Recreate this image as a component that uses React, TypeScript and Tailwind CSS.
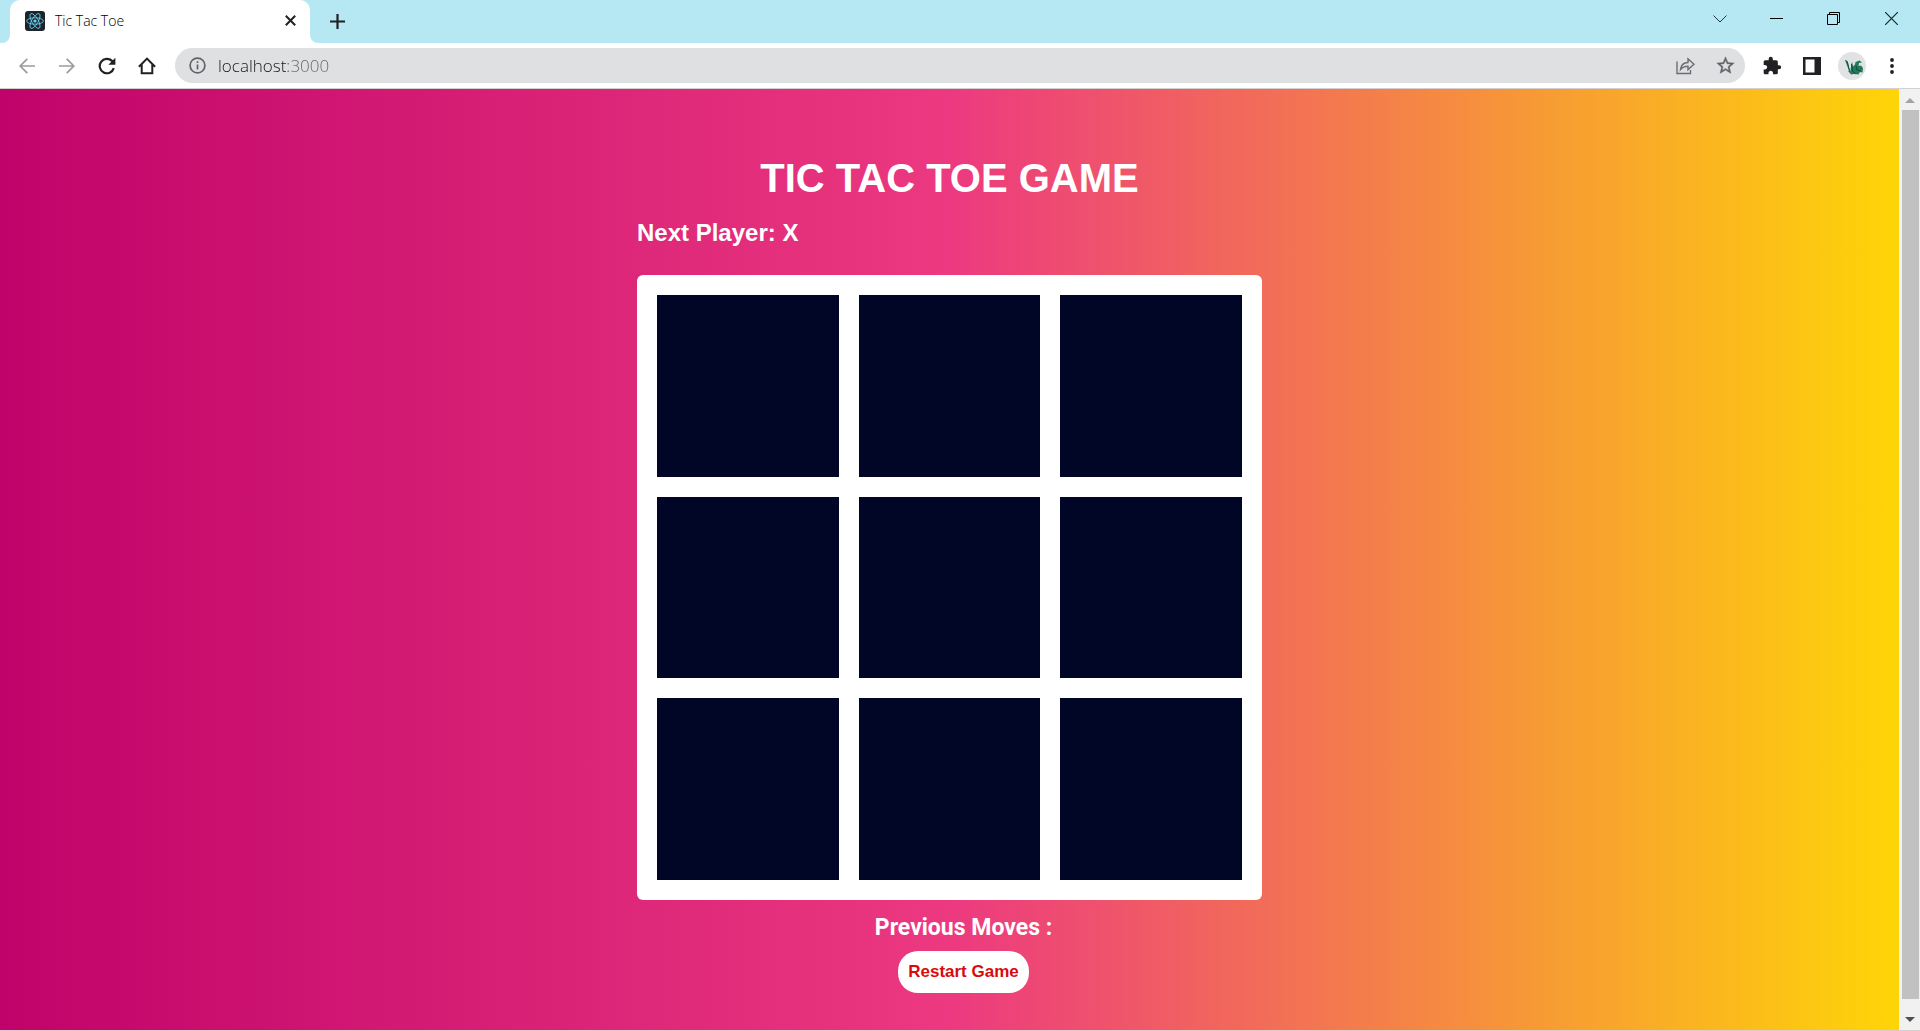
import type { ReactNode } from "react";

function IconButton({ label, className, children }: { label: string; className: string; children: ReactNode }) {
  return (
    <button type="button" aria-label={label} className={`flex shrink-0 items-center justify-center ${className}`}>
      {children}
    </button>
  );
}

function ReactLogo() {
  return (
    <svg width="20" height="20" viewBox="0 0 20 20" fill="none" stroke="#61dafb" strokeWidth="0.8">
      <rect width="20" height="20" rx="3" fill="#20232a" stroke="none" />
      <ellipse cx="10" cy="10" rx="8.4" ry="3.2" />
      <ellipse cx="10" cy="10" rx="8.4" ry="3.2" transform="rotate(60 10 10)" />
      <ellipse cx="10" cy="10" rx="8.4" ry="3.2" transform="rotate(120 10 10)" />
      <circle cx="10" cy="10" r="1.6" fill="#61dafb" stroke="none" />
    </svg>
  );
}

function TabStrip() {
  return (
    <div className="flex h-[43px] items-stretch bg-[#b5e8f2]">
      <div className="w-[10px] bg-white">
        <div className="h-full w-full rounded-br-lg bg-[#b5e8f2]" />
      </div>
      <div className="flex w-[300px] items-center rounded-t-[10px] bg-white pr-[10px] pb-[2px] pl-[15px]">
        <ReactLogo />
        <span className="ml-[10px] grow text-[14px] font-light text-black">Tic Tac Toe</span>
        <IconButton label="Close tab" className="size-5">
          <svg width="11" height="11" viewBox="0 0 11 11" stroke="#202124" strokeWidth="2">
            <path d="M0.800 0.800l9.400 9.400M10.200 0.800L0.800 10.200" />
          </svg>
        </IconButton>
      </div>
      <div className="w-[10px] bg-white">
        <div className="h-full w-full rounded-bl-lg bg-[#b5e8f2]" />
      </div>
      <IconButton label="New tab" className="w-[34px] pb-[1px]">
        <svg width="15" height="15" viewBox="0 0 15 15" stroke="#202124" strokeWidth="2.200">
          <path d="M7.500 0v15M0 7.500h15" />
        </svg>
      </IconButton>
      <div className="ml-auto flex h-[37px]">
        <IconButton label="Search tabs" className="w-14">
          <svg width="14" height="8" viewBox="0 0 14 8" fill="none" stroke="#20363b">
            <path d="M0.5 0.5L7 7l6.500-6.500" />
          </svg>
        </IconButton>
        <IconButton label="Minimize" className="w-[57px]">
          <svg width="13" height="13" viewBox="0 0 13 13" stroke="#000">
            <path d="M0 6.500h13" />
          </svg>
        </IconButton>
        <IconButton label="Restore" className="w-[57px]">
          <svg width="13" height="13" viewBox="0 0 13 13" fill="none" stroke="#000">
            <path d="M0.500 2.500h10v10h-10zM2.500 2.500v-2h10v10h-2" />
          </svg>
        </IconButton>
        <IconButton label="Close window" className="w-[58px]">
          <svg width="13" height="13" viewBox="0 0 13 13" stroke="#10282c" strokeWidth="1.200">
            <path d="M0 0l13 13M13 0L0 13" />
          </svg>
        </IconButton>
      </div>
    </div>
  );
}

function Toolbar() {
  return (
    <div className="flex h-[45px] items-center bg-white pr-2 pl-[7px]">
      <IconButton label="Back" className="w-10">
        <svg width="16" height="16" viewBox="0 0 16 16" fill="none" stroke="#9a9c9e" strokeWidth="1.700">
          <path d="M16 8H1.500M8.300 0.800L1.200 8l7.100 7.200" />
        </svg>
      </IconButton>
      <IconButton label="Forward" className="w-10">
        <svg width="16" height="16" viewBox="0 0 16 16" fill="none" stroke="#9a9c9e" strokeWidth="1.700">
          <path d="M0 8h14.500M7.700 0.800L14.800 8l-7.100 7.200" />
        </svg>
      </IconButton>
      <IconButton label="Reload" className="w-10">
        <svg width="18" height="18" viewBox="0 0 18 18" fill="none" stroke="#202124" strokeWidth="2.200">
          <path d="M15.800 11.200A7.200 7.200 0 1 1 14 3.900L16 5.900" />
          <path d="M17.400 0.800v7h-7z" fill="#202124" stroke="none" />
        </svg>
      </IconButton>
      <IconButton label="Home" className="w-10">
        <svg width="18" height="18" viewBox="0 0 18 18" fill="none" stroke="#202124" strokeWidth="2">
          <path d="M0.900 9.800L9 1.600l8.100 8.200M3.700 7.500v8.800h10.600V7.500" />
        </svg>
      </IconButton>
      <div className="ml-2 flex h-[35px] min-w-0 grow items-center rounded-full bg-[#dfe0e2] pl-[14px]">
        <svg className="shrink-0" width="17" height="17" viewBox="0 0 17 17" fill="none" stroke="#5f6368" strokeWidth="1.700">
          <circle cx="8.500" cy="8.500" r="7.400" />
          <path d="M8.500 7.500v5M8.500 4.300v1.800" />
        </svg>
        <input
          type="text"
          aria-label="Address"
          defaultValue="localhost:3000"
          className="ml-3 min-w-0 grow bg-[linear-gradient(to_right,#17181a_70px,#5f6368_70px)] bg-clip-text text-[17px] font-light text-transparent outline-none"
        />
        <IconButton label="Share" className="w-10">
          <svg width="19" height="18" viewBox="0 0 19 18" fill="none" stroke="#6a6d71" strokeWidth="1.400">
            <path d="M1 4.500V16.500h13.500V13" />
            <path d="M4.500 12.500c0.500-4.500 3-6.800 7.500-7V1.800L18 7.200l-6 5.400V9.200c-3.500 0-5.700 1-7.500 3.300z" />
          </svg>
        </IconButton>
        <IconButton label="Bookmark" className="w-10">
          <svg width="21" height="21" viewBox="0 0 24 24" fill="#5f6368" stroke="#5f6368" strokeWidth="0.400">
            <path d="M22 9.240l-7.190-.620L12 2 9.190 8.630 2 9.240l5.460 4.730L5.820 21 12 17.270 18.180 21l-1.630-7.030L22 9.240zM12 15.400l-3.760 2.270 1-4.280-3.320-2.880 4.380-.380L12 6.100l1.710 4.040 4.380.380-3.320 2.880 1 4.280L12 15.400z" />
          </svg>
        </IconButton>
      </div>
      <div className="ml-[7px] flex">
        <IconButton label="Extensions" className="w-10">
          <svg width="20" height="20" viewBox="0 0 24 24" fill="#202124">
            <path d="M20.500 11H19V7c0-1.100-.900-2-2-2h-4V3.500a2.500 2.500 0 0 0-5 0V5H4c-1.100 0-1.990.900-1.990 2v3.800H3.500c1.490 0 2.700 1.210 2.700 2.700s-1.210 2.700-2.700 2.700H2V20c0 1.100.900 2 2 2h3.800v-1.500c0-1.490 1.210-2.700 2.700-2.700s2.700 1.210 2.700 2.700V22H17c1.100 0 2-.900 2-2v-4h1.500a2.500 2.500 0 0 0 0-5z" />
          </svg>
        </IconButton>
        <IconButton label="Side panel" className="w-10">
          <svg width="18" height="18" viewBox="0 0 18 18" fill="#202124">
            <path d="M0 0h18v18H0zM2.500 2.500v13h9v-13z" fillRule="evenodd" />
          </svg>
        </IconButton>
        <IconButton label="Profile" className="w-10">
          <svg width="28" height="28" viewBox="0 0 28 28">
            <circle cx="14" cy="14" r="14" fill="#e1e2e3" />
            <path
              d="M7 8l2.500 1.500 1.200 5.500 1.800 4 .500-4.500 1-5 1 5 2-2 .500-2.500 4-1.500 2.500 2-3 .500-.500 3 2.500-.500L25 16l-.500 4.500-2.500-.500-1.500 2.500-4.500-.500-3 .500-3-3.500 1-.500L9 13.500z"
              fill="#217a58"
            />
            <path d="M7.500 8.500c3 .500 2.500 6.500 4 9.500M13.500 12l1 7 3 2.500M18 14l1 4 3.500 1" fill="none" stroke="#104a3a" />
          </svg>
        </IconButton>
        <IconButton label="Menu" className="w-10">
          <svg width="4" height="16" viewBox="0 0 4 16" fill="#202124">
            <circle cx="2" cy="2" r="1.900" />
            <circle cx="2" cy="8" r="1.900" />
            <circle cx="2" cy="14" r="1.900" />
          </svg>
        </IconButton>
      </div>
    </div>
  );
}

function Scrollbar() {
  return (
    <div className="flex w-[21px] shrink-0 flex-col items-center border-l border-[#fbf3d0] bg-[#f1f1f1]">
      <div className="flex h-[21px] shrink-0 items-center pt-[2px]">
        <svg width="10" height="5" viewBox="0 0 10 5" fill="#a3a3a3">
          <path d="M0 5l5-5 5 5z" />
        </svg>
      </div>
      <div className="w-[17px] grow bg-[#c1c1c1]" />
      <div className="flex h-[31px] shrink-0 items-center pt-[10px]">
        <svg width="10" height="5" viewBox="0 0 10 5" fill="#505050">
          <path d="M0 0l5 5 5-5z" />
        </svg>
      </div>
    </div>
  );
}

function Game() {
  return (
    <main className="flex grow flex-col items-center bg-[linear-gradient(to_right,#c0036a,#ec3980_50%,#fed507)] pt-[62px] font-['Liberation_Sans',Arial,sans-serif] text-white">
      <h1 className="text-[40px] leading-[54px] font-bold">TIC TAC TOE GAME</h1>
      <div className="w-[625px] max-w-full">
        <h2 className="mt-3 text-[24px] leading-8 font-bold">Next Player: X</h2>
        <div className="mt-[26px] grid aspect-square grid-cols-3 grid-rows-3 gap-5 rounded-md bg-white p-5">
          {Array.from({ length: 9 }, (_, i) => (
            <button key={i} type="button" aria-label={`Square ${i + 1}`} className="bg-[#020626]" />
          ))}
        </div>
      </div>
      <div className="flex flex-col items-center pl-7">
        <h3 className="mt-3 font-[Roboto,sans-serif] text-[23px] leading-8 font-bold">Previous Moves :</h3>
        <button type="button" className="mt-[7px] h-[42px] rounded-[20px] bg-white px-[10px] text-[17px] font-bold text-[#d90b0b]">
          Restart Game
        </button>
      </div>
    </main>
  );
}

export default function App() {
  return (
    <div className="flex min-h-screen flex-col bg-white font-['Open_Sans',sans-serif]">
      <header>
        <TabStrip />
        <Toolbar />
      </header>
      <div className="flex grow border-y border-[#d5cfd0]">
        <Game />
        <Scrollbar />
      </div>
    </div>
  );
}
